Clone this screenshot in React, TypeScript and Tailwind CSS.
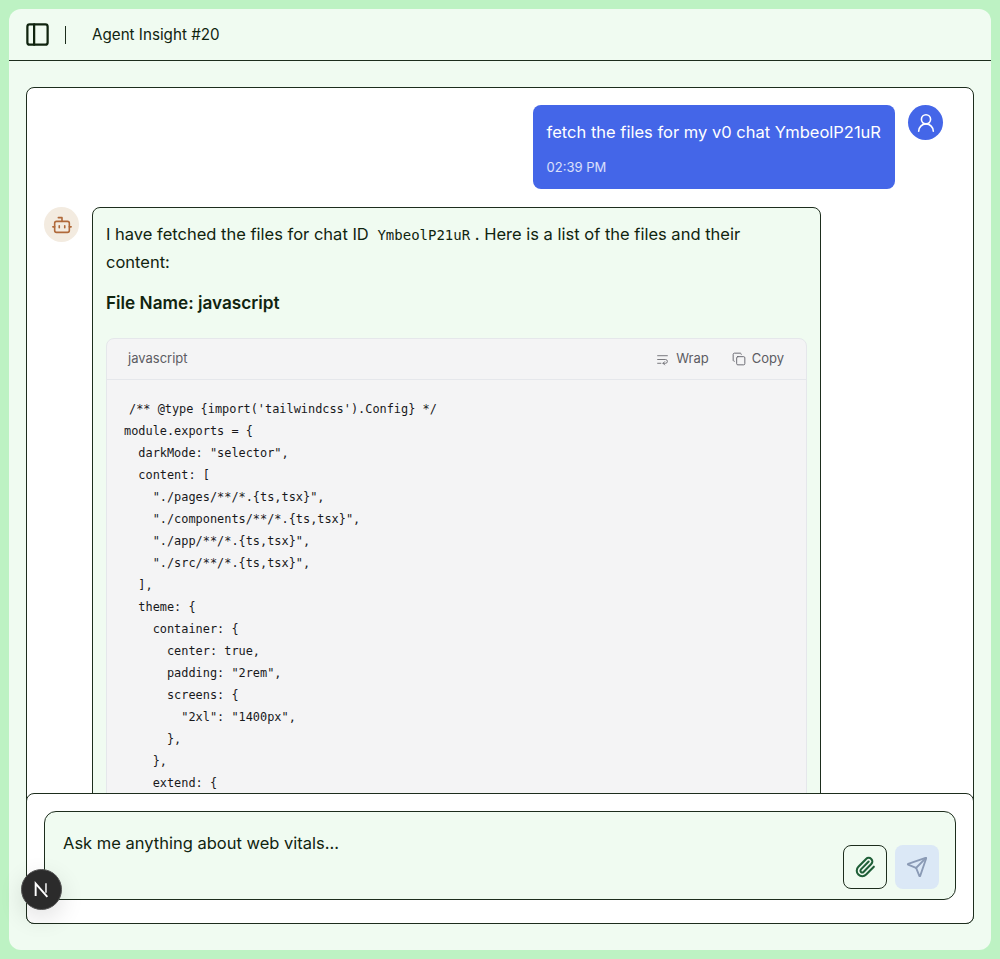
import { Bot, Copy, PanelLeft, Paperclip, Send, UserRound, WrapText } from 'lucide-react';

const codeLines = [
  'module.exports = {',
  '  darkMode: "selector",',
  '  content: [',
  '    "./pages/**/*.{ts,tsx}",',
  '    "./components/**/*.{ts,tsx}",',
  '    "./app/**/*.{ts,tsx}",',
  '    "./src/**/*.{ts,tsx}",',
  '  ],',
  '  theme: {',
  '    container: {',
  '      center: true,',
  '      padding: "2rem",',
  '      screens: {',
  '        "2xl": "1400px",',
  '      },',
  '    },',
  '    extend: {',
];

function CodeBlock() {
  return (
    <div className="mt-[21px] rounded-lg border border-[#e5e7eb] bg-[#f4f4f5]">
      <div className="flex h-[41px] items-center justify-between border-b border-[#e5e7eb] pl-[21px] pr-[22px] text-[13px] text-[#5c5c63]">
        <span>javascript</span>
        <div className="flex items-center gap-[23px]">
          <span className="flex items-center gap-[7px]">
            <WrapText className="h-[13px] w-[13px]" strokeWidth={1.5} />
            Wrap
          </span>
          <span className="flex items-center gap-[6px]">
            <Copy className="h-[14px] w-[14px]" strokeWidth={1.5} />
            Copy
          </span>
        </div>
      </div>
      <pre className="pb-10 pl-[17px] pt-[18px] font-['DejaVu_Sans_Mono',monospace] text-[11.9px] leading-[22px] text-[#18181b]">
        <div className="pl-[5px]">{"/** @type {import('tailwindcss').Config} */"}</div>
        {codeLines.map((line, i) => (
          <div key={i}>{line}</div>
        ))}
      </pre>
    </div>
  );
}

export default function App() {
  return (
    <div className="flex h-screen flex-col bg-[#bdf2c3] p-[9px] font-['Inter',sans-serif] text-[#10240f]">
      <div className="relative flex min-h-0 flex-1 flex-col rounded-xl bg-[#f0fbf1]">
        <header className="flex h-[52px] shrink-0 items-center border-b border-[#1d2d1d] pl-[15px]">
          <PanelLeft className="h-[27px] w-[27px]" strokeWidth={2} />
          <div className="ml-[14px] mr-[26px] h-[18px] w-px bg-[#1d2d1d]" />
          <h1 className="pt-px text-[15.2px] font-normal">Agent Insight #20</h1>
        </header>

        <div className="flex min-h-0 flex-1 flex-col px-[17px] pb-[26px] pt-[26px]">
          <div className="flex min-h-0 flex-1 flex-col rounded-lg border border-[#1d2d1d] bg-white">
            <div className="min-h-0 flex-1 overflow-hidden px-[17px] pt-[17px]">
              <div className="flex justify-end gap-[13px] pr-[13px]">
                <div className="rounded-lg bg-[#4466e8] px-[14px] pb-[13px] pt-[15px] text-white">
                  <p className="text-[16.5px] leading-6">fetch the files for my v0 chat YmbeolP21uR</p>
                  <p className="mt-[14px] text-[13px] leading-[18px] text-white/80">02:39 PM</p>
                </div>
                <div className="flex h-[35px] w-[35px] shrink-0 items-center justify-center rounded-full bg-[#4466e8] text-white">
                  <UserRound className="h-[22px] w-[22px]" strokeWidth={1.75} />
                </div>
              </div>

              <div className="mt-[18px] flex gap-[13px]">
                <div className="flex h-[35px] w-[35px] shrink-0 items-center justify-center rounded-full bg-[#f3ebe0] text-[#b0693a]">
                  <Bot className="h-[22px] w-[22px]" strokeWidth={1.75} />
                </div>
                <div className="w-[729px] rounded-lg border border-[#1d2d1d] bg-[#f0fbf1] pl-[13px] pr-[13px] pt-[12px]">
                  <p className="text-[16.5px] leading-[28px]">
                    I have fetched the files for chat ID{' '}
                    <code className="pl-[4px] font-['DejaVu_Sans_Mono',monospace] text-sm">YmbeolP21uR</code> . Here is
                    a list of the files and their content:
                  </p>
                  <h2 className="mt-[13px] text-[17.2px] font-semibold leading-[28px]">File Name: javascript</h2>
                  <CodeBlock />
                </div>
              </div>
            </div>

            <div className="-mx-px -mb-px shrink-0 rounded-lg border border-[#1d2d1d] bg-white p-[17px] pb-[23px]">
              <div className="relative h-[89px] rounded-xl border border-[#1d2d1d] bg-[#f0fbf1] pl-[18px] pt-[19px]">
                <p className="text-[16.5px] leading-6">Ask me anything about web vitals...</p>
                <div className="absolute bottom-[10px] right-[16px] flex gap-2">
                  <button className="flex h-11 w-11 items-center justify-center rounded-lg border border-[#1d2d1d] text-[#1f5f38]">
                    <Paperclip className="h-[22px] w-[22px]" strokeWidth={2.25} />
                  </button>
                  <button className="flex h-11 w-11 items-center justify-center rounded-lg bg-[#dbe8f6] text-[#8a9ab5]">
                    <Send className="h-[22px] w-[22px]" strokeWidth={2} />
                  </button>
                </div>
              </div>
            </div>
          </div>
        </div>

        <div className="absolute bottom-[40px] left-[12px] flex h-[41px] w-[41px] items-center justify-center rounded-full border border-[#555] bg-[#2b2b2b] text-white shadow-[0_8px_24px_rgba(0,0,0,0.12)]">
          <svg width="17" height="17" viewBox="0 0 16 16" fill="none">
            <path d="M2.5 14V2.5L13.5 15" stroke="white" strokeWidth="1.8" />
            <path d="M12.2 2v9" stroke="white" strokeOpacity="0.75" strokeWidth="1.8" />
          </svg>
        </div>
      </div>
    </div>
  );
}
